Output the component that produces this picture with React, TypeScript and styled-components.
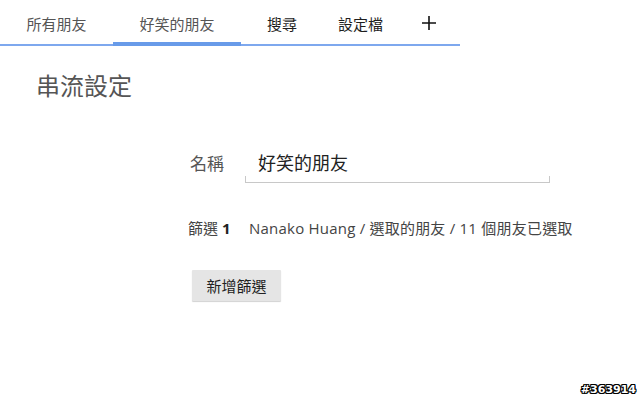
import React from "react";
import styled, { createGlobalStyle } from "styled-components";

const Global = createGlobalStyle`
  html, body { margin: 0; padding: 0; background: #fff; }
  body {
    width: 640px; height: 400px; overflow: hidden;
    font-family: "Open Sans", "Noto Sans CJK TC", sans-serif;
  }
  * { box-sizing: border-box; }
`;

const Page = styled.div`
  position: relative;
  width: 640px;
  height: 400px;
`;

const TabBar = styled.nav`
  display: flex;
  width: 460px;
  height: 46px;
  border-bottom: 2px solid #7ea8ee;
`;

const Tab = styled.div<{ $w: number; $active?: boolean; $dark?: boolean }>`
  width: ${(p) => p.$w}px;
  height: 46px;
  margin-bottom: -2px;
  display: flex;
  align-items: center;
  justify-content: center;
  padding-top: 4px;
  border-bottom: 4px solid ${(p) => (p.$active ? "#689be9" : "transparent")};
  font-size: 15px;
  color: ${(p) => (p.$dark ? "#1e1e1e" : "#555")};
`;

const PlusIcon = styled.svg`
  width: 16px;
  height: 16px;
  display: block;
`;

const Title = styled.h1`
  margin: 24px 0 0 36px;
  font-size: 24px;
  line-height: 32px;
  font-weight: 400;
  color: #555;
`;

const Form = styled.div`
  display: flex;
  flex-direction: column;
  margin: 45px 0 0 190px;
`;

const Row = styled.div`
  display: flex;
  align-items: center;
`;

const Label = styled.span`
  width: 55px;
  margin-top: -6px;
  font-size: 17px;
  color: #555;
`;

const Input = styled.div`
  position: relative;
  width: 305px;
  height: 36px;
  padding: 0 0 6px 13px;
  display: flex;
  align-items: center;
  font-size: 18px;
  color: #222;
  border-bottom: 1px solid #c8c8c8;
  &::before, &::after {
    content: "";
    position: absolute;
    bottom: 0;
    width: 1px;
    height: 6px;
    background: #c8c8c8;
  }
  &::before { left: 0; }
  &::after { right: 0; }
`;

const FilterRow = styled.div`
  display: flex;
  align-items: center;
  margin: 34px 0 0 -2px;
  font-size: 15px;
`;

const FilterLabel = styled.span`
  width: 61px;
  color: #444;
  b { font-weight: 700; color: #222; }
`;

const FilterDesc = styled.span`
  color: #444;
  letter-spacing: 0.22px;
`;

const Button = styled.button`
  align-self: flex-start;
  margin: 32px 0 0 2px;
  width: 89px;
  height: 31px;
  border: none;
  border-radius: 1px;
  background: #e5e5e5;
  box-shadow: 0 1px 1px rgba(0, 0, 0, 0.18);
  font-family: inherit;
  font-size: 15px;
  color: #222;
  padding: 0;
`;

const Watermark = styled.div`
  position: absolute;
  right: 4px;
  bottom: 4px;
  font-family: "DejaVu Sans", sans-serif;
  font-size: 11px;
  font-weight: 700;
  color: #fff;
  text-shadow: -1px 0 #000, 1px 0 #000, 0 -1px #000, 0 1px #000,
    -1px -1px #000, 1px 1px #000, -1px 1px #000, 1px -1px #000;
`;

export default function App() {
  return (
    <Page>
      <Global />
      <TabBar>
        <Tab $w={113}>所有朋友</Tab>
        <Tab $w={128} $active>好笑的朋友</Tab>
        <Tab $w={82} $dark>搜尋</Tab>
        <Tab $w={75} $dark>設定檔</Tab>
        <Tab $w={62} $dark>
          <PlusIcon viewBox="0 0 16 16">
            <path d="M8 1v14M1 8h14" stroke="#111" strokeWidth="1.6" fill="none" />
          </PlusIcon>
        </Tab>
      </TabBar>
      <Title>串流設定</Title>
      <Form>
        <Row>
          <Label>名稱</Label>
          <Input>好笑的朋友</Input>
        </Row>
        <FilterRow>
          <FilterLabel>
            篩選 <b>1</b>
          </FilterLabel>
          <FilterDesc>Nanako Huang / 選取的朋友 / 11 個朋友已選取</FilterDesc>
        </FilterRow>
        <Button>新增篩選</Button>
      </Form>
      <Watermark>#363914</Watermark>
    </Page>
  );
}
